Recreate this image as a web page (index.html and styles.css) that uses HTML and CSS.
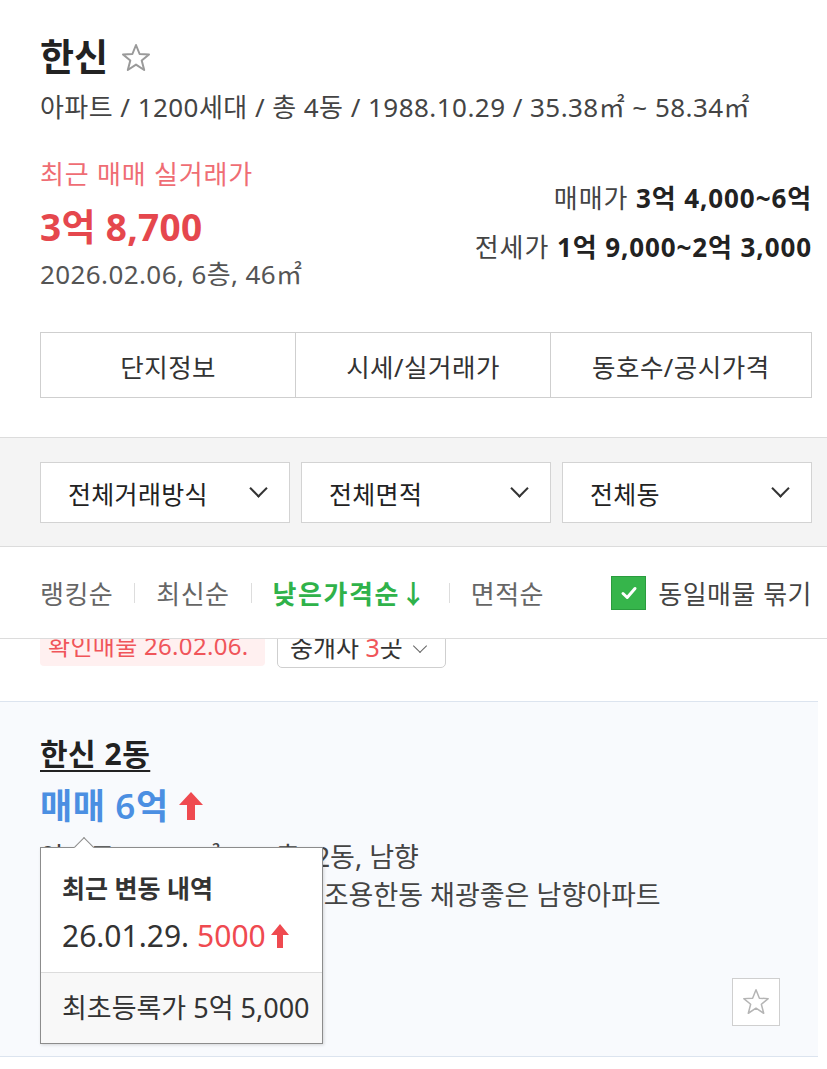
FILE: index.html
```html
<!DOCTYPE html>
<html lang="ko">
<head>
    <meta charset="UTF-8">
    <meta name="viewport" content="width=device-width, initial-scale=1.0">
    <title>한신 아파트</title>
    <link rel="stylesheet" href="styles.css">
</head>
<body>
    <div class="summary">
        <div class="title-row">
            <h1 class="title">한신</h1>
            <svg class="title-star" width="32" height="32" viewBox="0 0 32 32">
                <path d="M16 3 L19.6 12 L29 12.4 L21.7 18.4 L24.2 28 L16 22.6 L7.8 28 L10.3 18.4 L3 12.4 L12.4 12 Z" fill="none" stroke="#9a9a9a" stroke-width="2" stroke-linejoin="round"/>
            </svg>
        </div>
        <p class="meta">아파트 / 1200세대 / 총 4동 / 1988.10.29 / 35.38㎡ ~ 58.34㎡</p>

        <div class="prices">
            <div class="recent">
                <div class="recent-label">최근 매매 실거래가</div>
                <div class="recent-price">3억 8,700</div>
                <div class="recent-date">2026.02.06, 6층, 46㎡</div>
            </div>
            <div class="ranges">
                <div class="range">매매가 <b>3억 4,000~6억</b></div>
                <div class="range">전세가 <b>1억 9,000~2억 3,000</b></div>
            </div>
        </div>

        <div class="tabs">
            <div class="tab">단지정보</div>
            <div class="tab">시세/실거래가</div>
            <div class="tab">동호수/공시가격</div>
        </div>
    </div>

    <div class="filters">
        <div class="select">전체거래방식 <span class="chev"></span></div>
        <div class="select">전체면적 <span class="chev"></span></div>
        <div class="select">전체동 <span class="chev"></span></div>
    </div>

    <div class="sortbar">
        <span class="sort">랭킹순</span>
        <span class="sort-sep"></span>
        <span class="sort">최신순</span>
        <span class="sort-sep"></span>
        <span class="sort sort-on">낮은가격순↓</span>
        <span class="sort-sep"></span>
        <span class="sort">면적순</span>
        <label class="group-check">
            <span class="checkbox">
                <svg width="20" height="20" viewBox="0 0 20 20"><path d="M4 10.5 L8.2 14.5 L16 5.5" fill="none" stroke="#fff" stroke-width="3" stroke-linecap="round" stroke-linejoin="round"/></svg>
            </span>
            동일매물 묶기
        </label>
    </div>

    <div class="list">
        <div class="item item-partial">
            <span class="badge">확인매물 26.02.06.</span>
            <span class="broker">중개사 <em>3</em>곳 <span class="mini-chev"></span></span>
        </div>

        <div class="item item-active">
            <div class="item-name">한신 2동</div>
            <div class="item-price">매매 6억
                <svg class="up" width="26" height="30" viewBox="0 0 26 30"><path d="M13 1 L25 14 H17 V29 H9 V14 H1 Z" fill="#ef4a50"/></svg>
            </div>
            <p class="item-line">아파트 46/35㎡, 6/6층, 2동, 남향</p>
            <p class="item-line">올수리 완료된 깨끗한 집, 조용한동 채광좋은 남향아파트</p>

            <div class="tooltip">
                <div class="tooltip-top">
                    <div class="tooltip-title">최근 변동 내역</div>
                    <div class="tooltip-change">26.01.29. <span class="red">5000</span>
                        <svg width="20" height="26" viewBox="0 0 20 26"><path d="M10 1 L19 12 H13 V25 H7 V12 H1 Z" fill="#ef4a50"/></svg>
                    </div>
                </div>
                <div class="tooltip-bottom">최초등록가 5억 5,000</div>
            </div>

            <button class="fav">
                <svg width="30" height="30" viewBox="0 0 32 32">
                    <path d="M16 3 L19.6 12 L29 12.4 L21.7 18.4 L24.2 28 L16 22.6 L7.8 28 L10.3 18.4 L3 12.4 L12.4 12 Z" fill="none" stroke="#b5b5b5" stroke-width="1.6" stroke-linejoin="round"/>
                </svg>
            </button>
        </div>
    </div>
</body>
</html>
```

FILE: styles.css
```css
body {
    margin: 0;
    background-color: #fff;
    font-family: "Noto Sans", "Noto Sans CJK KR", sans-serif;
    color: #333;
    width: 827px;
    overflow: hidden;
}

p {
    margin: 0;
}

.summary {
    padding: 33px 15px 39px 40px;
}

.title-row {
    display: flex;
    align-items: center;
    gap: 12px;
    height: 48px;
}

.title {
    margin: 0;
    font-size: 37px;
    font-weight: 700;
    color: #222;
    line-height: 48px;
}

.title-star {
    margin-top: 2px;
}

.meta {
    margin-top: 10px;
    font-size: 26px;
    line-height: 32px;
    color: #444;
    letter-spacing: 0.45px;
}

.prices {
    display: flex;
    justify-content: space-between;
    margin-top: 35px;
}

.recent-label {
    font-size: 26px;
    line-height: 32px;
    color: #ef6d74;
    letter-spacing: 0.8px;
}

.recent-price {
    margin-top: 15px;
    font-size: 37px;
    line-height: 44px;
    font-weight: 700;
    color: #e5474d;
    letter-spacing: 0.3px;
}

.recent-date {
    margin-top: 9px;
    font-size: 26px;
    line-height: 32px;
    color: #555;
    letter-spacing: 0.4px;
}

.ranges {
    margin-top: 22px;
    display: flex;
    flex-direction: column;
    align-items: flex-end;
    gap: 13px;
}

.range {
    font-size: 26px;
    line-height: 36px;
    color: #444;
    letter-spacing: 0.9px;
}

.range b {
    color: #222;
}

.tabs {
    margin-top: 42px;
    display: grid;
    grid-template-columns: 255fr 255fr 262fr;
    border: 1px solid #cfcfcf;
    height: 64px;
}

.tab {
    display: flex;
    align-items: center;
    justify-content: center;
    font-size: 25.5px;
    color: #333;
    border-left: 1px solid #cfcfcf;
    letter-spacing: 0.5px;
}

.tab:first-child {
    border-left: none;
}

.filters {
    display: grid;
    grid-template-columns: repeat(3, 1fr);
    gap: 11px;
    padding: 24px 15px 23px 40px;
    background-color: #f4f4f4;
    border-top: 1px solid #dcdcdc;
    border-bottom: 1px solid #dcdcdc;
}

.select {
    height: 59px;
    background-color: #fff;
    border: 1px solid #d3d3d3;
    display: flex;
    align-items: center;
    justify-content: space-between;
    padding: 0 24px 0 27px;
    font-size: 25px;
    color: #222;
    letter-spacing: 0.3px;
}

.chev {
    width: 11px;
    height: 11px;
    border-right: 2.5px solid #333;
    border-bottom: 2.5px solid #333;
    transform: rotate(45deg);
    margin-top: -8px;
}

.sortbar {
    height: 91px;
    display: flex;
    align-items: center;
    padding: 0 15px 0 40px;
    border-bottom: 1px solid #dcdcdc;
    font-size: 26px;
    color: #666;
    letter-spacing: 0.5px;
}

.sort-sep {
    width: 1px;
    height: 20px;
    background-color: #ddd;
    margin: 0 21px;
}

.sort-on {
    color: #2fb24a;
    font-weight: 700;
    letter-spacing: 1.6px;
}

.group-check {
    margin-left: auto;
    display: flex;
    align-items: center;
    gap: 12px;
    color: #444;
}

.checkbox {
    width: 35px;
    height: 34px;
    background-color: #36b54b;
    border: 1px solid #2a9c3e;
    box-sizing: border-box;
    display: flex;
    align-items: center;
    justify-content: center;
}

.list {
    overflow: hidden;
    height: 428px;
    margin-right: 9px;
    position: relative;
}

.item {
    border-bottom: 1px solid #dce4ef;
    position: relative;
}

.item-partial {
    margin-top: -13px;
    padding: 0 0 33px 40px;
    display: flex;
    align-items: flex-start;
    gap: 12px;
    height: 42px;
}

.badge {
    height: 40px;
    width: 225px;
    box-sizing: border-box;
    padding: 0 8px;
    background-color: #fff0f0;
    color: #f0555a;
    border-radius: 4px;
    font-size: 24px;
    line-height: 40px;
    letter-spacing: 0.3px;
    white-space: nowrap;
}

.broker {
    height: 40px;
    width: 155px;
    border: 1px solid #cfcfcf;
    border-radius: 5px;
    padding: 0 0 0 12px;
    font-size: 25px;
    line-height: 40px;
    color: #333;
    white-space: nowrap;
}

.broker em {
    font-style: normal;
    color: #f0555a;
}

.mini-chev {
    display: inline-block;
    width: 9px;
    height: 9px;
    border-right: 1.5px solid #666;
    border-bottom: 1.5px solid #666;
    transform: rotate(45deg);
    margin: 0 0 6px 6px;
}

.item-active {
    background-color: #f8fafd;
    padding: 34px 15px 0 40px;
    height: 320px;
}

.item-name {
    font-size: 30px;
    line-height: 36px;
    font-weight: 700;
    color: #222;
    text-decoration: underline;
    text-underline-offset: 5px;
    text-decoration-thickness: 2px;
    letter-spacing: 0.5px;
}

.item-price {
    margin-top: 14px;
    font-size: 35px;
    line-height: 40px;
    font-weight: 600;
    color: #4b8fe2;
    display: flex;
    align-items: center;
    gap: 9px;
    letter-spacing: 0.6px;
}

.item-line {
    font-size: 27px;
    line-height: 38px;
    color: #444;
}

.item-price + .item-line {
    margin-top: 12px;
}

.tooltip {
    position: absolute;
    left: 40px;
    top: 145px;
    width: 281px;
    background-color: #fff;
    border: 1px solid #8c8c8c;
    box-shadow: 1px 1px 3px rgba(0, 0, 0, 0.15);
}

.tooltip::before {
    content: "";
    position: absolute;
    top: -8px;
    left: 36px;
    width: 13px;
    height: 13px;
    background-color: #fff;
    border-top: 1px solid #8c8c8c;
    border-left: 1px solid #8c8c8c;
    transform: rotate(45deg);
}

.tooltip-top {
    padding: 23px 0 16px 21px;
    border-bottom: 1px solid #dcdcdc;
}

.tooltip-title {
    font-size: 25px;
    line-height: 34px;
    font-weight: 700;
    color: #333;
}

.tooltip-change {
    margin-top: 11px;
    font-size: 30px;
    line-height: 40px;
    color: #333;
    display: flex;
    align-items: center;
}

.tooltip-change .red {
    color: #ef4a50;
    margin-left: 8px;
    margin-right: 4px;
}

.tooltip-bottom {
    background-color: #f8f8f8;
    height: 70px;
    line-height: 70px;
    padding-left: 21px;
    font-size: 27px;
    color: #333;
}

.fav {
    position: absolute;
    right: 38px;
    top: 276px;
    width: 48px;
    height: 48px;
    background-color: #fff;
    border: 1px solid #cfcfcf;
    padding: 0;
    display: flex;
    align-items: center;
    justify-content: center;
}
```
